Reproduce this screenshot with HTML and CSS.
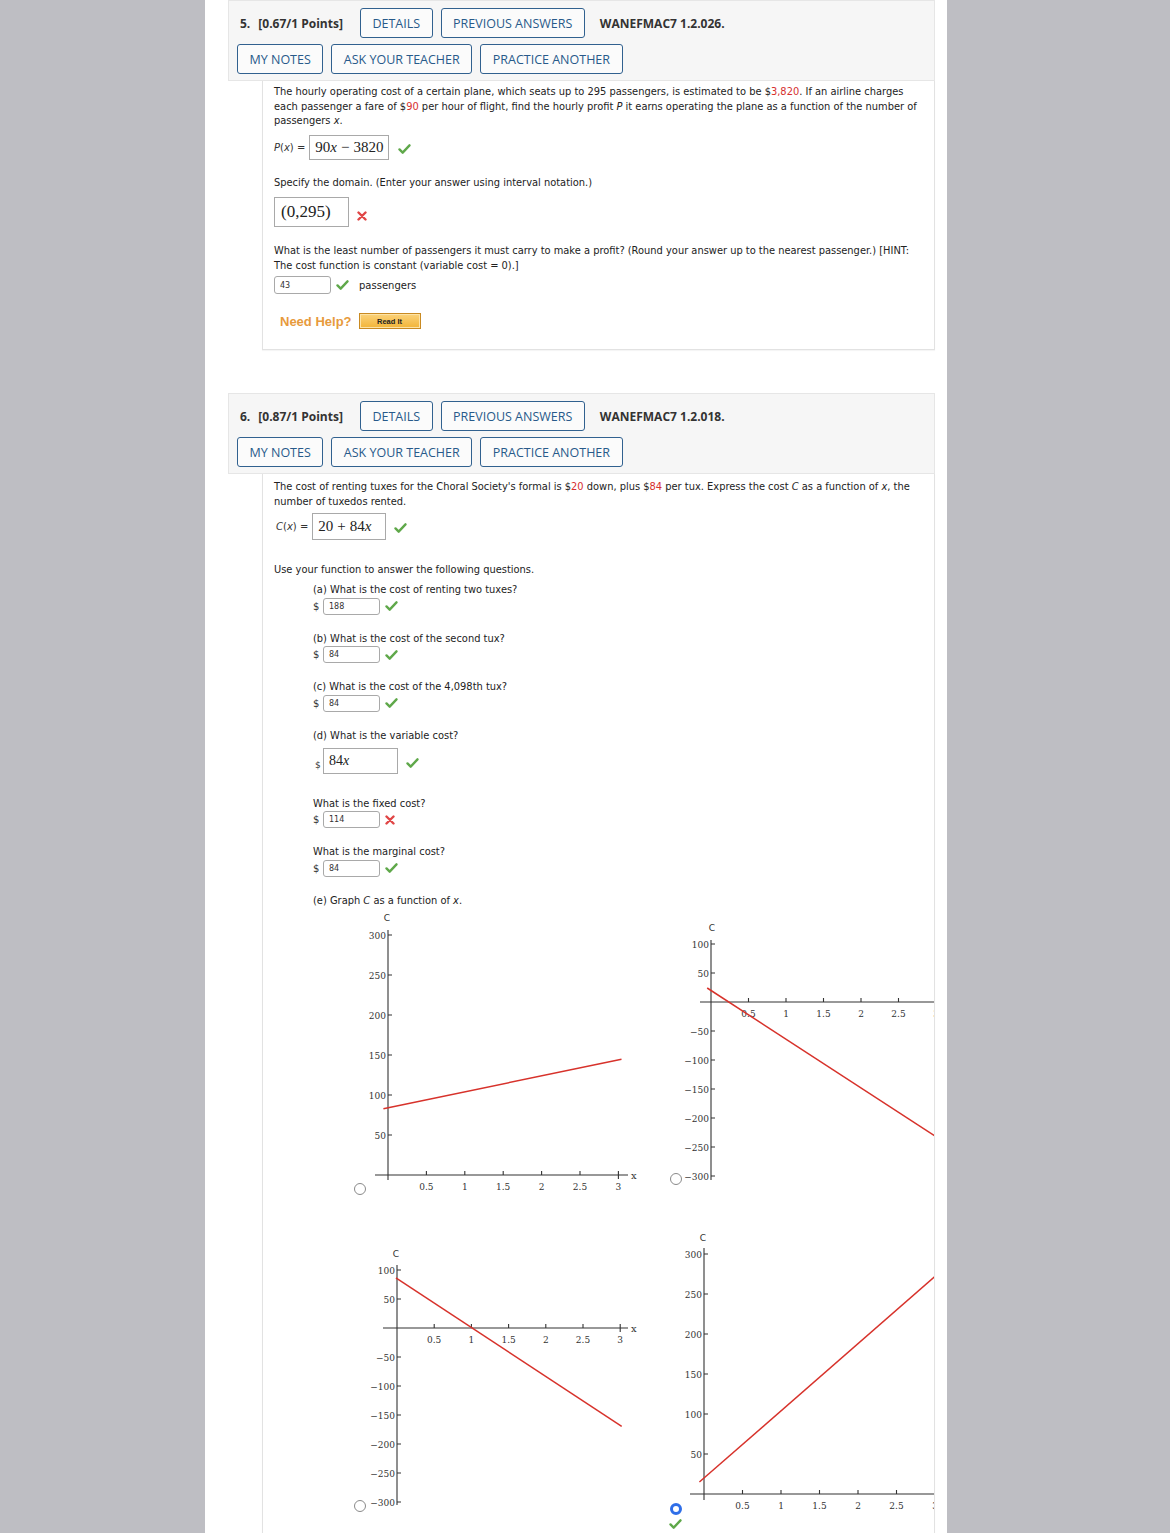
FILE: index.html
```html
<!DOCTYPE html>
<html>
<head>
<meta charset="utf-8">
<title>WebAssign</title>
<link rel="stylesheet" href="styles.css">
</head>
<body>
<div class="page">

  <section class="question q5">
    <div class="qhead">
      <div class="hrow hrow1">
        <span class="qnum">5.</span><span class="pts">[0.67/1 Points]</span>
        <span class="btn">DETAILS</span><span class="btn">PREVIOUS ANSWERS</span>
        <span class="qid">WANEFMAC7 1.2.026.</span>
      </div>
      <div class="hrow hrow2">
        <span class="btn">MY NOTES</span><span class="btn">ASK YOUR TEACHER</span><span class="btn">PRACTICE ANOTHER</span>
      </div>
    </div>
    <div class="qbody b5">
      <p class="txt">The hourly operating cost of a certain plane, which seats up to 295 passengers, is estimated to be $<span class="red">3,820</span>. If an airline charges each passenger a fare of $<span class="red">90</span> per hour of flight, find the hourly profit <i>P</i> it earns operating the plane as a function of the number of passengers <i>x</i>.</p>
      <div class="arow px-row">
        <span class="lbl"><i>P</i>(<i>x</i>) =</span>
        <span class="mbox px-box">90<i>x</i><span class="op">−</span>3820</span>
        <svg class="ok ok-big" viewBox="0 0 14 11"><path d="M1.5 6 L5 9.5 L12.5 1.5"/></svg>
      </div>
      <p class="txt spec">Specify the domain. (Enter your answer using interval notation.)</p>
      <div class="arow dom-row">
        <span class="mbox dom-box">(0,295)</span>
        <svg class="bad" viewBox="0 0 10 10"><path d="M1.5 1.5 L8.5 8.5 M8.5 1.5 L1.5 8.5"/></svg>
      </div>
      <p class="txt least">What is the least number of passengers it must carry to make a profit? (Round your answer up to the nearest passenger.) [HINT: The cost function is constant (variable cost = 0).]</p>
      <div class="arow pass-row">
        <span class="inp">43</span>
        <svg class="ok" viewBox="0 0 14 11"><path d="M1.5 6 L5 9.5 L12.5 1.5"/></svg>
        <span class="unit">passengers</span>
      </div>
      <div class="help">
        <span class="needhelp">Need Help?</span><span class="readit">Read It</span>
      </div>
    </div>
  </section>

  <section class="question q6">
    <div class="qhead">
      <div class="hrow hrow1">
        <span class="qnum">6.</span><span class="pts">[0.87/1 Points]</span>
        <span class="btn">DETAILS</span><span class="btn">PREVIOUS ANSWERS</span>
        <span class="qid">WANEFMAC7 1.2.018.</span>
      </div>
      <div class="hrow hrow2">
        <span class="btn">MY NOTES</span><span class="btn">ASK YOUR TEACHER</span><span class="btn">PRACTICE ANOTHER</span>
      </div>
    </div>
    <div class="qbody b6">
      <p class="txt">The cost of renting tuxes for the Choral Society's formal is $<span class="red">20</span> down, plus $<span class="red">84</span> per tux. Express the cost <i>C</i> as a function of <i>x</i>, the number of tuxedos rented.</p>
      <div class="arow cx-row">
        <span class="lbl"><i>C</i>(<i>x</i>) =</span>
        <span class="mbox cx-box">20<span class="op">+</span>84<i>x</i></span>
        <svg class="ok ok-big" viewBox="0 0 14 11"><path d="M1.5 6 L5 9.5 L12.5 1.5"/></svg>
      </div>
      <p class="txt use">Use your function to answer the following questions.</p>
      <div class="subs">
        <p class="txt sq first">(a) What is the cost of renting two tuxes?</p>
        <div class="srow"><span class="dol">$</span><span class="inp">188</span><svg class="ok" viewBox="0 0 14 11"><path d="M1.5 6 L5 9.5 L12.5 1.5"/></svg></div>

        <p class="txt sq">(b) What is the cost of the second tux?</p>
        <div class="srow"><span class="dol">$</span><span class="inp">84</span><svg class="ok" viewBox="0 0 14 11"><path d="M1.5 6 L5 9.5 L12.5 1.5"/></svg></div>

        <p class="txt sq">(c) What is the cost of the 4,098th tux?</p>
        <div class="srow"><span class="dol">$</span><span class="inp">84</span><svg class="ok" viewBox="0 0 14 11"><path d="M1.5 6 L5 9.5 L12.5 1.5"/></svg></div>

        <p class="txt sq">(d) What is the variable cost?</p>
        <div class="srow big"><span class="dol small">$</span><span class="mbox var-box">84<i>x</i></span><svg class="ok ok-big" viewBox="0 0 14 11"><path d="M1.5 6 L5 9.5 L12.5 1.5"/></svg></div>

        <p class="txt sq gap">What is the fixed cost?</p>
        <div class="srow"><span class="dol">$</span><span class="inp">114</span><svg class="bad" viewBox="0 0 10 10"><path d="M1.5 1.5 L8.5 8.5 M8.5 1.5 L1.5 8.5"/></svg></div>

        <p class="txt sq">What is the marginal cost?</p>
        <div class="srow"><span class="dol">$</span><span class="inp">84</span><svg class="ok" viewBox="0 0 14 11"><path d="M1.5 6 L5 9.5 L12.5 1.5"/></svg></div>

        <p class="txt sq">(e) Graph <i>C</i> as a function of <i>x</i>.</p>
      </div>

      <div class="graphs">
        <!-- graph 1 -->
        <div class="gcell">
          <span class="radio"></span>
          <svg class="graph" width="300" height="287" viewBox="0 0 300 287">
            <text class="cl" x="21" y="13">C</text>
            <line class="ax" x1="22" y1="22" x2="22" y2="272"/>
            <line class="ax" x1="9" y1="267" x2="262" y2="267"/>
            <path class="tk" d="M22 27h4M22 67h4M22 107h4M22 147h4M22 187h4M22 227h4"/>
            <text class="yl" x="20" y="30.5">300</text>
            <text class="yl" x="20" y="70.5">250</text>
            <text class="yl" x="20" y="110.5">200</text>
            <text class="yl" x="20" y="150.5">150</text>
            <text class="yl" x="20" y="190.5">100</text>
            <text class="yl" x="20" y="230.5">50</text>
            <path class="tk" d="M60.4 263v4M98.8 263v4M137.2 263v4M175.6 263v4M214 263v4M252.4 263v8"/>
            <text class="xl" x="60.4" y="282">0.5</text>
            <text class="xl" x="98.8" y="282">1</text>
            <text class="xl" x="137.2" y="282">1.5</text>
            <text class="xl" x="175.6" y="282">2</text>
            <text class="xl" x="214" y="282">2.5</text>
            <text class="xl" x="252.4" y="282">3</text>
            <text class="xv" x="265" y="271">x</text>
            <line class="fn" x1="17.4" y1="200.8" x2="255.5" y2="151.2"/>
          </svg>
        </div>
        <!-- graph 2 -->
        <div class="gcell">
          <span class="radio"></span>
          <svg class="graph" width="260" height="277" viewBox="0 0 260 277">
            <text class="cl" x="30" y="23">C</text>
            <line class="ax" x1="29" y1="32" x2="29" y2="272"/>
            <line class="ax" x1="18" y1="94" x2="260" y2="94"/>
            <path class="tk" d="M29 36h4M29 65h4M29 123h4M29 152h4M29 181h4M29 210h4M29 239h4M29 268h4"/>
            <text class="yl" x="27" y="39.5">100</text>
            <text class="yl" x="27" y="68.5">50</text>
            <text class="yl" x="27" y="126.5">−50</text>
            <text class="yl" x="27" y="155.5">−100</text>
            <text class="yl" x="27" y="184.5">−150</text>
            <text class="yl" x="27" y="213.5">−200</text>
            <text class="yl" x="27" y="242.5">−250</text>
            <text class="yl" x="27" y="271.5">−300</text>
            <path class="tk" d="M66.5 90v4M104 90v4M141.5 90v4M179 90v4M216.5 90v4M254 90v4"/>
            <text class="xl" x="66.5" y="109">0.5</text>
            <text class="xl" x="104" y="109">1</text>
            <text class="xl" x="141.5" y="109">1.5</text>
            <text class="xl" x="179" y="109">2</text>
            <text class="xl" x="216.5" y="109">2.5</text>
            <text class="xl" x="254" y="109">3</text>
            <line class="fn" x1="25.2" y1="80" x2="254" y2="228.6"/>
          </svg>
        </div>
        <!-- graph 3 -->
        <div class="gcell">
          <span class="radio"></span>
          <svg class="graph" width="300" height="284" viewBox="0 0 300 284">
            <text class="cl" x="30" y="29">C</text>
            <line class="ax" x1="31" y1="37" x2="31" y2="277"/>
            <line class="ax" x1="17" y1="100" x2="262" y2="100"/>
            <path class="tk" d="M31 42h4M31 71h4M31 129h4M31 158h4M31 187h4M31 216h4M31 245h4M31 274h4"/>
            <text class="yl" x="29" y="45.5">100</text>
            <text class="yl" x="29" y="74.5">50</text>
            <text class="yl" x="29" y="132.5">−50</text>
            <text class="yl" x="29" y="161.5">−100</text>
            <text class="yl" x="29" y="190.5">−150</text>
            <text class="yl" x="29" y="219.5">−200</text>
            <text class="yl" x="29" y="248.5">−250</text>
            <text class="yl" x="29" y="277.5">−300</text>
            <path class="tk" d="M68.2 96v4M105.4 96v4M142.6 96v4M179.8 96v4M217 96v4M254.2 96v8"/>
            <text class="xl" x="68.2" y="115">0.5</text>
            <text class="xl" x="105.4" y="115">1</text>
            <text class="xl" x="142.6" y="115">1.5</text>
            <text class="xl" x="179.8" y="115">2</text>
            <text class="xl" x="217" y="115">2.5</text>
            <text class="xl" x="254.2" y="115">3</text>
            <text class="xv" x="265" y="104">x</text>
            <line class="fn" x1="29.9" y1="49.8" x2="255.7" y2="198.4"/>
          </svg>
        </div>
        <!-- graph 4 -->
        <div class="gcell">
          <span class="radio on"></span>
          <svg class="graph" width="260" height="286" viewBox="0 0 260 286">
            <text class="cl" x="21" y="13">C</text>
            <line class="ax" x1="22" y1="20" x2="22" y2="272"/>
            <line class="ax" x1="8" y1="266" x2="260" y2="266"/>
            <path class="tk" d="M22 26h4M22 66h4M22 106h4M22 146h4M22 186h4M22 226h4"/>
            <text class="yl" x="20" y="29.5">300</text>
            <text class="yl" x="20" y="69.5">250</text>
            <text class="yl" x="20" y="109.5">200</text>
            <text class="yl" x="20" y="149.5">150</text>
            <text class="yl" x="20" y="189.5">100</text>
            <text class="yl" x="20" y="229.5">50</text>
            <path class="tk" d="M60.5 262v4M99 262v4M137.5 262v4M176 262v4M214.5 262v4M253 262v4"/>
            <text class="xl" x="60.5" y="281">0.5</text>
            <text class="xl" x="99" y="281">1</text>
            <text class="xl" x="137.5" y="281">1.5</text>
            <text class="xl" x="176" y="281">2</text>
            <text class="xl" x="214.5" y="281">2.5</text>
            <text class="xl" x="253" y="281">3</text>
            <line class="fn" x1="17.4" y1="254" x2="257" y2="45"/>
          </svg>
          <svg class="ok radio-ok" viewBox="0 0 14 11"><path d="M1.5 6 L5 9.5 L12.5 1.5"/></svg>
        </div>
      </div>
    </div>
  </section>

</div>
</body>
</html>
```

FILE: styles.css
```css
* { box-sizing: border-box; }

html, body {
  margin: 0;
  padding: 0;
}

body {
  background: #bebec3;
  font-family: "DejaVu Sans", Verdana, sans-serif;
  color: #222;
}

.page {
  width: 742px;
  height: 1533px;
  margin-left: 205px;
  background: #ffffff;
  overflow: hidden;
}

.question {
  margin: 0 12px 0 23px;
}

.q6 {
  margin-top: 43px;
}

/* ---------- header ---------- */
.qhead {
  background: #f6f6f6;
  border: 1px solid #e6e6e6;
  padding: 7px 0 6px;
  font-family: "Open Sans", "Noto Sans", sans-serif;
}

.hrow {
  display: flex;
  align-items: center;
  gap: 8px;
  height: 30px;
}

.hrow1 { padding-left: 11px; }
.hrow2 { padding-left: 8px; margin-top: 6px; }

.qnum, .pts, .qid {
  font-weight: 700;
  font-size: 12px;
  color: #333;
}

.pts { margin-right: 9px; }
.qid { margin-left: 7px; }

.btn {
  height: 30px;
  display: inline-flex;
  align-items: center;
  padding: 0 11.5px;
  border: 1.5px solid #31618f;
  border-radius: 3px;
  background: #fbfbfb;
  color: #285a8a;
  font-size: 12.5px;
  font-weight: 500;
}

/* ---------- body ---------- */
.qbody {
  margin-left: 34px;
  border: 1px solid #e2e2e2;
  border-top: none;
  padding: 4px 8px 20px 11px;
  overflow: hidden;
  box-shadow: 0 1px 1px rgba(0,0,0,0.04);
}

.b6 {
  padding-top: 6px;
  padding-bottom: 60px;
}

.txt {
  margin: 0;
  font-size: 9.9px;
  line-height: 14.5px;
  color: #222;
}

.b6 > .txt:first-child { margin-right: 6px; }
.least { margin-right: 4px; }

.red { color: #d62f2f; }

.arow {
  display: flex;
  align-items: center;
}

.lbl {
  font-size: 10px;
  color: #333;
  margin-right: 4px;
}

.mbox {
  display: inline-flex;
  align-items: center;
  border: 1px solid #a9a9a9;
  background: #fff;
  font-family: "Liberation Serif", "Times New Roman", serif;
  color: #222;
}

.op { margin: 0 4px; }

.px-row { margin-top: 6.5px; height: 25px; }
.px-box { height: 25px; padding: 0 5px; font-size: 15px; }

.spec { margin-top: 16px; }

.dom-row { margin-top: 6.5px; height: 30px; }
.dom-box { width: 75px; height: 30px; padding-left: 6px; font-size: 17px; }
.dom-row .bad { margin: 8px 0 0 8px; }

.least { margin-top: 17px; }

.pass-row { margin-top: 3px; height: 18px; }

.inp {
  display: inline-flex;
  align-items: center;
  width: 57px;
  height: 18px;
  padding-left: 5px;
  border: 1px solid #a9a9a9;
  border-radius: 3px;
  font-size: 8px;
  color: #333;
  background: #fff;
}

.unit {
  font-size: 10px;
  margin-left: 10px;
  color: #222;
}

.ok {
  width: 13px;
  height: 10px;
  margin-left: 5px;
  fill: none;
  stroke: #5fa84a;
  stroke-width: 2.6;
  stroke-linecap: round;
  stroke-linejoin: round;
}

.ok-big { margin-left: 9px; margin-top: 3px; }

.bad {
  width: 10px;
  height: 10px;
  margin-left: 5px;
  fill: none;
  stroke: #e04646;
  stroke-width: 2.4;
  stroke-linecap: round;
}

.help {
  display: flex;
  align-items: center;
  margin-top: 19px;
  height: 16px;
  padding-left: 6px;
}

.needhelp {
  font-family: "Liberation Sans", Arial, sans-serif;
  font-weight: 700;
  font-size: 13px;
  color: #e79a3c;
}

.readit {
  margin-left: 7px;
  width: 62px;
  height: 16px;
  display: inline-flex;
  align-items: center;
  justify-content: center;
  background: linear-gradient(#fbd27a, #f2b437);
  border: 1px solid #c98a22;
  box-shadow: inset 0 0 0 1px #fde3a6;
  font-family: "Liberation Sans", Arial, sans-serif;
  font-weight: 700;
  font-size: 7.5px;
  color: #222;
}

/* ---------- question 6 ---------- */
.cx-row { margin-top: 4px; height: 27px; padding-left: 2px; }
.cx-box { width: 74px; height: 27px; padding-left: 5px; font-size: 15px; }
.cx-row .ok-big { margin-left: 8px; }

.use { margin-top: 23px; }

.subs { margin-left: 39px; }

.sq { margin-top: 17px; }
.sq.first { margin-top: 5.5px; }
.sq.gap { margin-top: 23px; }

.srow {
  display: flex;
  align-items: center;
  height: 17px;
}

.srow .inp { height: 17px; margin-left: 4px; }

.dol {
  font-size: 10px;
  color: #333;
  width: 6px;
}

.srow.big {
  margin-top: 4.5px;
  height: 26px;
}

.dol.small {
  font-size: 9px;
  margin-left: 2px;
  margin-top: 8px;
  width: 4px;
}

.var-box {
  width: 75px;
  height: 26px;
  margin-left: 4px;
  padding-left: 5px;
  font-size: 14px;
}

.srow.big .ok-big { margin-left: 8px; margin-top: 4px; }

/* ---------- graphs ---------- */
.graphs {
  margin-top: -0.5px;
  margin-left: 76px;
  display: grid;
  grid-template-columns: 316px 316px;
  row-gap: 33px;
  align-items: start;
}

.gcell {
  display: grid;
  grid-template-columns: 16px auto;
  grid-template-rows: auto auto;
  justify-content: start;
}

.gcell .graph {
  grid-column: 2;
  grid-row: 1;
  display: block;
  overflow: visible;
}

.radio {
  grid-column: 1;
  grid-row: 1;
  align-self: end;
  width: 12px;
  height: 12px;
  margin-left: 4px;
  border: 1px solid #8a8a8a;
  border-radius: 50%;
  background: #fff;
}

.radio.on {
  border: 3.5px solid #2f6ee8;
  margin-bottom: -1px;
}

.radio-ok {
  grid-column: 1;
  grid-row: 2;
  margin-left: 3px;
  margin-top: 5px;
}

.ax, .tk {
  stroke: #333;
  stroke-width: 1.1;
  fill: none;
}

.fn {
  stroke: #d7322b;
  stroke-width: 1.5;
}

.yl {
  font-family: "DejaVu Serif", serif;
  font-size: 9px;
  fill: #333;
  text-anchor: end;
}

.xl {
  font-family: "DejaVu Serif", serif;
  font-size: 9px;
  fill: #333;
  text-anchor: middle;
}

.xv {
  font-family: "DejaVu Serif", serif;
  font-size: 10px;
  fill: #333;
}

.cl {
  font-family: "DejaVu Sans", sans-serif;
  font-size: 9px;
  fill: #333;
  text-anchor: middle;
}
```
